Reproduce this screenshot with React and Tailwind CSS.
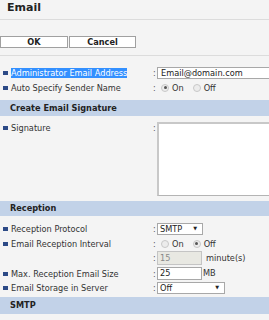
import React from "react";

const font = { fontFamily: '"DejaVu Sans", Verdana, sans-serif' };

function Label({ children, hl }) {
  return (
    <div className="flex h-[10px] w-[151px] shrink-0 items-center pl-[3px]">
      <span className="mr-[3px] h-[4px] w-[5px] bg-[#2c4a86]" />
      {hl ? (
        <span className="bg-[#3390ff] text-white leading-[9px] py-[0.5px]">{children}</span>
      ) : (
        <span className="leading-[10px]">{children}</span>
      )}
    </div>
  );
}

function Colon() {
  return <span className="w-[6px] shrink-0 pl-[2px] leading-[10px] text-[#555]">:</span>;
}

function Radio({ on }) {
  return (
    <span className="flex h-[8px] w-[8px] items-center justify-center rounded-full border border-[#c8c8c8] bg-[#ececec]">
      {on && <span className="h-[3px] w-[3px] rounded-full bg-[#555]" />}
    </span>
  );
}

function Header({ children, cls }) {
  return (
    <div className={"flex items-center bg-[#c2d2e8] pl-[10px] font-bold text-[#222] " + cls}>
      {children}
    </div>
  );
}

export default function App() {
  return (
    <div
      className="h-[320px] w-[269px] overflow-hidden bg-[#f4f4f4] text-[8.2px] text-[#333]"
      style={font}
    >
      <div className="flex h-[20px] items-center border-b border-[#dcdcdc] pl-[7px] pb-[3px] text-[11px] font-bold text-[#222]">
        Email
      </div>

      <div className="mt-[16px] flex h-[12px]">
        <div className="flex w-[68px] items-center justify-center border border-[#a0a0a0] bg-white font-bold text-[#222]">
          OK
        </div>
        <div className="ml-[1px] flex w-[67px] items-center justify-center border border-[#a0a0a0] bg-white font-bold text-[#222]">
          Cancel
        </div>
      </div>

      <div className="mt-[7px] border-t border-[#dcdcdc]" />

      <div className="mt-[11px] flex h-[12px] items-center">
        <Label hl>Administrator Email Address</Label>
        <Colon />
        <div className="flex h-[12px] w-[130px] shrink-0 items-center border border-[#a8a8a8] bg-white pl-[3px] text-[#222]">
          Email@domain.com
        </div>
      </div>

      <div className="mt-[2px] flex h-[14px] items-center">
        <Label>Auto Specify Sender Name</Label>
        <Colon />
        <div className="flex items-center pl-[4px]">
          <Radio on />
          <span className="ml-[3px] mr-[9px]">On</span>
          <Radio />
          <span className="ml-[3px]">Off</span>
        </div>
      </div>

      <Header cls="mt-[5px] h-[16px]">Create Email Signature</Header>

      <div className="mt-[6px] flex h-[74px] items-start">
        <div className="flex items-start pt-[1px]">
          <Label>Signature</Label>
          <Colon />
        </div>
        <div className="h-[74px] w-[130px] shrink-0 border border-[#b4b4b4] border-l-[2px] border-t-[2px] border-l-[#c8c8c8] border-t-[#c8c8c8] bg-white" />
      </div>

      <Header cls="mt-[5px] h-[15px]">Reception</Header>

      <div className="mt-[7px] flex h-[12px] items-center">
        <Label>Reception Protocol</Label>
        <Colon />
        <div className="flex h-[12px] w-[46px] items-center justify-between border border-[#a8a8a8] bg-white pl-[2px] pr-[5px] text-[#222]">
          <span>SMTP</span>
          <span className="text-[5px]">▼</span>
        </div>
      </div>

      <div className="mt-[2px] flex h-[14px] items-center">
        <Label>Email Reception Interval</Label>
        <Colon />
        <div className="flex items-center pl-[4px]">
          <Radio />
          <span className="ml-[3px] mr-[9px]">On</span>
          <Radio on />
          <span className="ml-[3px]">Off</span>
        </div>
      </div>

      <div className="flex h-[14px] items-center">
        <div className="w-[151px] shrink-0" />
        <Colon />
        <div className="flex h-[14px] w-[45px] items-center border border-[#c4c4c4] bg-[#e8e8e2] pl-[2px] text-[#888]">
          15
        </div>
        <span className="ml-[4px]">minute(s)</span>
      </div>

      <div className="mt-[2px] flex h-[13px] items-center">
        <Label>Max. Reception Email Size</Label>
        <Colon />
        <div className="flex h-[13px] w-[45px] items-center border border-[#a8a8a8] bg-white pl-[2px] text-[#222]">
          25
        </div>
        <span className="ml-[1px]">MB</span>
      </div>

      <div className="mt-[2px] flex h-[12px] items-center">
        <Label>Email Storage in Server</Label>
        <Colon />
        <div className="flex h-[12px] w-[68px] items-center justify-between border border-[#a8a8a8] bg-white pl-[2px] pr-[5px] text-[#222]">
          <span>Off</span>
          <span className="text-[5px]">▼</span>
        </div>
      </div>

      <Header cls="mt-[3px] h-[17px]">SMTP</Header>
    </div>
  );
}
